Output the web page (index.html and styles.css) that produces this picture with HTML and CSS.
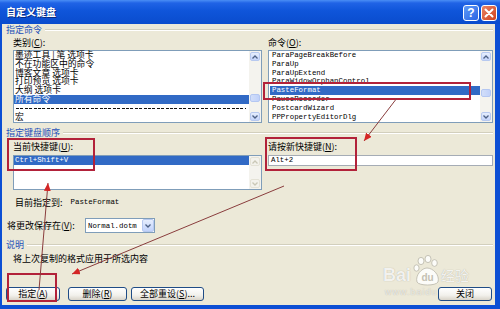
FILE: index.html
```html
<!DOCTYPE html>
<html lang="zh-CN">
<head>
    <meta charset="UTF-8">
    <title>自定义键盘</title>
    <link rel="stylesheet" href="styles.css">
</head>
<body>
<div class="window">
    <div class="titlebar">
        <span class="title">自定义键盘</span>
        <span class="tb-btn help">?</span>
        <span class="tb-btn close">
            <svg width="10" height="10" viewBox="0 0 10 10"><path d="M1.5 1.5 L8.5 8.5 M8.5 1.5 L1.5 8.5" stroke="#fff" stroke-width="2" stroke-linecap="round"/></svg>
        </span>
    </div>
    <div class="frame">
        <div class="group">指定命令</div>
        <div class="cols">
            <div class="col">
                <div class="label">类别(<u>C</u>):</div>
                <div class="listbox list-tall">
                    <div class="rows cjk-rows">
                        <div class="row">墨迹工具 | 笔 选项卡</div>
                        <div class="row">不在功能区中的命令</div>
                        <div class="row">博客文章 选项卡</div>
                        <div class="row">打印预览 选项卡</div>
                        <div class="row">大纲 选项卡</div>
                        <div class="row sel">所有命令</div>
                        <div class="row dash-row"><span class="dashes"></span></div>
                        <div class="row">宏</div>
                    </div>
                    <div class="scroll">
                        <div class="sb-btn"><svg width="6" height="4" viewBox="0 0 6 4"><path d="M0.5 3.5 L3 1 L5.5 3.5" fill="none" stroke="#4d6185" stroke-width="1.3"/></svg></div>
                        <div class="sb-track"><div class="sb-thumb thumb-left"></div></div>
                        <div class="sb-btn"><svg width="6" height="4" viewBox="0 0 6 4"><path d="M0.5 0.5 L3 3 L5.5 0.5" fill="none" stroke="#4d6185" stroke-width="1.3"/></svg></div>
                    </div>
                </div>
            </div>
            <div class="col">
                <div class="label">命令(<u>O</u>):</div>
                <div class="listbox list-tall">
                    <div class="rows mono cmd-rows">
                        <div class="row">ParaPageBreakBefore</div>
                        <div class="row">ParaUp</div>
                        <div class="row">ParaUpExtend</div>
                        <div class="row">ParaWidowOrphanControl</div>
                        <div class="row sel">PasteFormat</div>
                        <div class="row">PauseRecorder</div>
                        <div class="row">PostcardWizard</div>
                        <div class="row">PPPropertyEditorDlg</div>
                    </div>
                    <div class="scroll">
                        <div class="sb-btn"><svg width="6" height="4" viewBox="0 0 6 4"><path d="M0.5 3.5 L3 1 L5.5 3.5" fill="none" stroke="#4d6185" stroke-width="1.3"/></svg></div>
                        <div class="sb-track"><div class="sb-thumb thumb-right"></div></div>
                        <div class="sb-btn"><svg width="6" height="4" viewBox="0 0 6 4"><path d="M0.5 0.5 L3 3 L5.5 0.5" fill="none" stroke="#4d6185" stroke-width="1.3"/></svg></div>
                    </div>
                </div>
            </div>
        </div>

        <div class="group group-keys">指定键盘顺序</div>
        <div class="cols cols-keys">
            <div class="col">
                <div class="label">当前快捷键(<u>U</u>):</div>
                <div class="listbox list-short">
                    <div class="rows mono">
                        <div class="row sel">Ctrl+Shift+V</div>
                    </div>
                    <div class="scroll">
                        <div class="sb-btn off"><svg width="6" height="4" viewBox="0 0 6 4"><path d="M0.5 3.5 L3 1 L5.5 3.5" fill="none" stroke="#c9c7b6" stroke-width="1.3"/></svg></div>
                        <div class="sb-track"></div>
                        <div class="sb-btn off"><svg width="6" height="4" viewBox="0 0 6 4"><path d="M0.5 0.5 L3 3 L5.5 0.5" fill="none" stroke="#c9c7b6" stroke-width="1.3"/></svg></div>
                    </div>
                </div>
            </div>
            <div class="col">
                <div class="label">请按新快捷键(<u>N</u>):</div>
                <div class="textbox mono">Alt+2</div>
            </div>
        </div>

        <div class="assigned">
            <span>目前指定到:</span>
            <span class="mono">PasteFormat</span>
        </div>

        <div class="save-row">
            <span class="save-label">将更改保存在(<u>V</u>):</span>
            <div class="select">
                <span class="select-text mono">Normal.dotm</span>
                <span class="select-btn"><svg width="6" height="4" viewBox="0 0 6 4"><path d="M0.5 0.5 L3 3 L5.5 0.5" fill="none" stroke="#4d6185" stroke-width="1.3"/></svg></span>
            </div>
        </div>

        <div class="group group-desc">说明</div>
        <div class="desc">将上次复制的格式应用于所选内容</div>

        <div class="buttons">
            <span class="btn btn-assign">指定(<u>A</u>)</span>
            <span class="btn btn-delete">删除(<u>R</u>)</span>
            <span class="btn btn-reset">全部重设(<u>S</u>)...</span>
            <span class="btn btn-close">关闭</span>
        </div>
    </div>

    <!-- annotations drawn on top of the screenshot -->
    <svg class="marks" width="500" height="309" viewBox="0 0 500 309">
        <defs>
            <marker id="head" markerWidth="9" markerHeight="8" refX="8" refY="3.5" orient="auto" markerUnits="userSpaceOnUse">
                <path d="M0,0 L8,3.5 L0,7 z" fill="#d42626"/>
            </marker>
        </defs>
        <rect x="264" y="83" width="206" height="16" fill="none" stroke="#b2223a" stroke-width="2"/>
        <rect x="8" y="139" width="86" height="31" fill="none" stroke="#b2223a" stroke-width="2"/>
        <rect x="266" y="138" width="90" height="32" fill="none" stroke="#b2223a" stroke-width="2"/>
        <rect x="8" y="274" width="48" height="27" fill="none" stroke="#b2223a" stroke-width="2"/>
        <line x1="397" y1="98" x2="364" y2="141" stroke="#8a3d3d" stroke-width="1" marker-end="url(#head)"/>
        <line x1="39" y1="290" x2="48" y2="183" stroke="#8a3d3d" stroke-width="1" marker-end="url(#head)"/>
        <line x1="284" y1="186" x2="72" y2="274" stroke="#8a3d3d" stroke-width="1" marker-end="url(#head)"/>
    </svg>

    <div class="watermark">
        <span class="wm-bai">Bai</span>
        <svg class="wm-paw" width="28" height="31" viewBox="0 0 28 31">
            <g fill="rgba(255,255,255,0.85)" stroke="#b9b6a8" stroke-width="0.8">
                <ellipse cx="8" cy="6" rx="3" ry="3.6"/>
                <ellipse cx="15" cy="4" rx="3" ry="3.6"/>
                <ellipse cx="21.5" cy="8" rx="2.8" ry="3.4"/>
                <ellipse cx="3.5" cy="13" rx="2.6" ry="3.2"/>
                <path d="M4 27 C2 20 9 13 14 13 C20 13 27 20 25 27 C23 31 6 31 4 27 z"/>
            </g>
            <text x="14.5" y="26" text-anchor="middle" font-family="Liberation Sans" font-weight="bold" font-size="10" fill="#c4c1b3">du</text>
        </svg>
        <span class="wm-jy">经验</span>
        <span class="wm-url">www.baidu</span>
    </div>
</div>
</body>
</html>
```

FILE: styles.css
```css
* {
    box-sizing: border-box;
}
body {
    margin: 0;
    background: #ece9d8;
    font-family: "Noto Sans CJK SC", "Noto Sans", sans-serif;
    font-size: 9px;
    color: #000;
}
u {
    text-decoration: underline;
}
.mono {
    font-family: "Liberation Mono", "Noto Sans CJK SC", monospace;
    font-size: 7.4px;
}
.window {
    position: relative;
    width: 500px;
    height: 309px;
    display: flex;
    flex-direction: column;
    overflow: hidden;
}
.titlebar {
    height: 24px;
    display: flex;
    align-items: center;
    padding: 0 3px 0 6px;
    background: linear-gradient(to bottom, #4a8ef5 0, #2063e6 3px, #0f55da 45%, #0a4ccd 100%);
}
.title {
    color: #fff;
    font-weight: bold;
    font-size: 10px;
    line-height: 12px;
    text-shadow: 1px 1px 0 #0a2a80;
}
.tb-btn {
    width: 16px;
    height: 16px;
    margin-top: 2px;
    border: 1px solid #fff;
    border-radius: 3px;
    display: flex;
    align-items: center;
    justify-content: center;
    color: #fff;
    font-family: "Liberation Sans", sans-serif;
    font-weight: bold;
    font-size: 12px;
}
.help {
    margin-left: auto;
    background: linear-gradient(135deg, #5f9bf7, #2a64e4);
}
.close {
    margin-left: 2px;
    background: linear-gradient(135deg, #e88465, #d1411e);
}
.frame {
    flex: 1;
    background: #ece9d8;
    border-left: 2px solid #0c4fd4;
    border-right: 5px solid #0c4fd4;
    border-bottom: 4px solid #0c4fd4;
    padding: 0 2px 0 4px;
}
.group {
    height: 12px;
    line-height: 12px;
    display: flex;
    align-items: center;
    color: #1d50b8;
}
.group::after {
    content: "";
    flex: 1;
    margin-left: 3px;
    border-top: 1px solid #d2cfbd;
    border-bottom: 1px solid #fff;
}
.group-keys {
    margin-top: 4px;
}
.group-desc {
    margin-top: 6px;
}
.cols {
    display: grid;
    grid-template-columns: 249px 225px;
    column-gap: 6px;
    padding-left: 7px;
}
.label {
    height: 12px;
    line-height: 12px;
    margin-top: 1px;
    white-space: nowrap;
}
.cols-keys .label {
    margin-top: 2px;
}
.listbox {
    display: flex;
    background: #fff;
    border: 1px solid #7f9db9;
    margin-top: 1px;
}
.cols-keys .listbox {
    margin-top: 2px;
}
.list-tall {
    height: 73px;
}
.list-short {
    height: 35px;
}
.rows {
    flex: 1;
}
.row {
    height: 8.8px;
    line-height: 8.8px;
    padding-left: 1px;
    white-space: nowrap;
}
.cjk-rows .row {
    font-size: 8.8px;
}
.cmd-rows .row {
    margin-left: 1px;
    padding-left: 2px;
}
.row.sel {
    background: #316ac5;
    color: #fff;
}
.dash-row {
    padding: 4.2px 3px 0 2px;
}
.dashes {
    display: block;
    height: 1px;
    background: repeating-linear-gradient(to right, #111 0, #111 3px, transparent 3px, transparent 4.4px);
}
.scroll {
    width: 12px;
    padding: 1px;
    display: flex;
    flex-direction: column;
    background: #f4f3ee;
}
.sb-btn {
    height: 9px;
    border: 1px solid #b7c9f0;
    border-radius: 2px;
    background: linear-gradient(to bottom, #e6eefd, #c4d4fb);
    display: flex;
    align-items: center;
    justify-content: center;
}
.sb-btn.off {
    border-color: #e4e2d6;
    background: #f3f2ec;
}
.sb-track {
    flex: 1;
}
.sb-thumb {
    height: 8px;
    border: 1px solid #b4c7f2;
    border-radius: 2px;
    background: linear-gradient(to right, #d2def9, #c0d1fa);
}
.thumb-left {
    margin-top: 33px;
}
.thumb-right {
    margin-top: 28px;
}
.textbox {
    height: 11px;
    margin-top: 2px;
    border: 1px solid #a5acb5;
    background: #fff;
    padding-left: 2px;
    line-height: 9px;
}
.assigned {
    height: 12px;
    margin-top: 6px;
    padding-left: 9px;
    display: flex;
    align-items: center;
    gap: 8px;
}
.save-row {
    height: 15px;
    margin-top: 10px;
    padding-left: 1px;
    display: flex;
    align-items: center;
}
.save-label {
    width: 78px;
    white-space: nowrap;
}
.select {
    width: 70px;
    height: 15px;
    border: 1px solid #7f9db9;
    background: #fff;
    display: flex;
    align-items: center;
}
.select-text {
    flex: 1;
    padding-left: 2px;
}
.select-btn {
    width: 12px;
    height: 13px;
    border: 1px solid #b7c9f0;
    border-radius: 2px;
    background: linear-gradient(to bottom, #e6eefd, #c1d2fb);
    display: flex;
    align-items: center;
    justify-content: center;
}
.desc {
    height: 12px;
    line-height: 12px;
    margin-top: 2px;
    padding-left: 7px;
}
.buttons {
    height: 14px;
    margin-top: 22px;
    display: flex;
}
.btn {
    height: 14px;
    line-height: 12px;
    border: 1px solid #1f4c86;
    border-radius: 3px;
    background: linear-gradient(to bottom, #ffffff, #f2f1ec 60%, #d9d4c9);
    text-align: center;
    white-space: nowrap;
}
.btn-assign {
    width: 54px;
}
.btn-delete {
    width: 59px;
    margin-left: 8px;
}
.btn-reset {
    width: 73px;
    margin-left: 4px;
}
.btn-close {
    width: 54px;
    margin-left: auto;
    margin-right: 1px;
}
.marks {
    position: absolute;
    left: 0;
    top: 0;
    pointer-events: none;
}
.watermark {
    position: absolute;
    left: 383px;
    top: 255px;
    width: 90px;
    height: 44px;
    pointer-events: none;
}
.wm-bai {
    position: absolute;
    left: 0;
    top: 10px;
    font-family: "Liberation Sans", sans-serif;
    font-weight: bold;
    font-size: 18px;
    color: rgba(255, 255, 255, 0.85);
    text-shadow: 0 0 1px #a9a698;
}
.wm-paw {
    position: absolute;
    left: 30px;
    top: 0;
}
.wm-jy {
    position: absolute;
    left: 58px;
    top: 12px;
    font-size: 14px;
    line-height: 16px;
    color: rgba(255, 255, 255, 0.85);
    text-shadow: 0 0 1px #a9a698;
}
.wm-url {
    position: absolute;
    left: 2px;
    top: 32px;
    font-family: "Liberation Sans", sans-serif;
    font-size: 9px;
    color: rgba(255, 255, 255, 0.7);
    text-shadow: 0 0 1px #a9a698;
    letter-spacing: 1px;
}
```
